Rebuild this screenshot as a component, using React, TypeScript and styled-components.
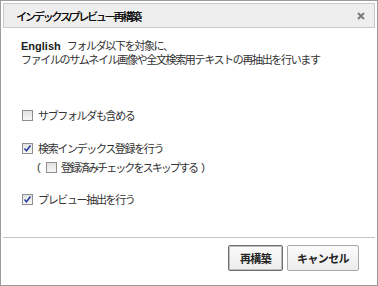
import styled, { createGlobalStyle } from "styled-components";

const GlobalStyle = createGlobalStyle`
    html, body {
        margin: 0;
        padding: 0;
        background: #fff;
    }
    body {
        font-family: "Liberation Sans", "Noto Sans CJK JP", sans-serif;
        font-size: 11px;
        letter-spacing: -1.35px;
        color: #333;
    }
`;

const Dialog = styled.div`
    width: 378px;
    height: 286px;
    box-sizing: border-box;
    border: 1px solid #9c9c9c;
    padding: 2px;
    background: #fff;
    display: flex;
    flex-direction: column;
`;

const TitleBar = styled.div`
    height: 25px;
    box-sizing: border-box;
    border: 1px solid #c9c9c9;
    background: #eeeeee;
    display: flex;
    align-items: center;
    justify-content: space-between;
    padding: 0 9px 0 12px;
`;

const Title = styled.span`
    font-size: 11px;
    font-weight: 400;
    letter-spacing: -2.2px;
    color: #111;
    text-shadow: 0.3px 0 0 #111;
`;

const CloseButton = styled.span`
    display: inline-flex;
    cursor: pointer;
`;

const Content = styled.div`
    flex: 1;
    padding: 11px 0 0 18px;
`;

const Description = styled.p`
    margin: 0;
    line-height: 14px;
    color: #333;

    b {
        color: #222;
        letter-spacing: 0;
        margin-right: 6px;
    }
`;

const Options = styled.div`
    margin-top: 39px;
    display: flex;
    flex-direction: column;
`;

const Row = styled.label<{ $gap?: number; $indent?: number; $tight?: boolean }>`
    height: 18px;
    display: flex;
    align-items: center;
    margin-top: ${(p) => p.$gap ?? 0}px;
    padding-left: ${(p) => p.$indent ?? 1}px;
    letter-spacing: ${(p) => (p.$tight ? -1.9 : -1.35)}px;
    color: #333;
`;

const Box = styled.span<{ $space?: number }>`
    width: 11px;
    height: 11px;
    box-sizing: border-box;
    border: 1px solid #8f8f8f;
    background: linear-gradient(#e2e2e2, #f8f8f8);
    display: inline-flex;
    align-items: center;
    justify-content: center;
    margin-right: ${(p) => p.$space ?? 5}px;
    flex-shrink: 0;
`;

const Paren = styled.span`
    letter-spacing: 0;
    margin-right: 5px;
`;

const ParenEnd = styled.span`
    letter-spacing: 0;
    margin-left: 4px;
`;

const Footer = styled.div`
    border-top: 1px solid #c2c2c2;
    display: flex;
    justify-content: flex-end;
    gap: 4px;
    padding: 7px 16px 12px 0;
`;

const Button = styled.button<{ $primary?: boolean }>`
    width: ${(p) => (p.$primary ? 55 : 72)}px;
    height: 26px;
    box-sizing: border-box;
    padding: 0;
    font-family: "Liberation Sans", "Noto Sans CJK JP", sans-serif;
    font-size: 11px;
    letter-spacing: -0.6px;
    font-weight: 700;
    color: #222;
    background: linear-gradient(#fbfbfb, #ececec);
    border: 1px solid ${(p) => (p.$primary ? "#6f6f6f" : "#a9a9a9")};
    box-shadow: ${(p) => (p.$primary ? "inset 0 0 0 1px #bdbdbd" : "none")};
    border-radius: 2px;
    cursor: pointer;
`;

const Check = ({ checked, space }: { checked?: boolean; space?: number }) => (
    <Box $space={space}>
        {checked && (
            <svg width="9" height="9" viewBox="0 0 9 9">
                <path d="M1.5 4.5 L3.5 6.8 L7.5 1.5" fill="none" stroke="#2b3f9e" strokeWidth="1.6" />
            </svg>
        )}
    </Box>
);

export default function App() {
    return (
        <>
            <GlobalStyle />
            <Dialog>
                <TitleBar>
                    <Title>インデックス/プレビュー再構築</Title>
                    <CloseButton>
                        <svg width="8" height="8" viewBox="0 0 8 8">
                            <path d="M1 1 L7 7 M7 1 L1 7" stroke="#7a7a7a" strokeWidth="2" />
                        </svg>
                    </CloseButton>
                </TitleBar>
                <Content>
                    <Description>
                        <b>English</b>フォルダ以下を対象に、
                        <br />
                        ファイルのサムネイル画像や全文検索用テキストの再抽出を行います
                    </Description>
                    <Options>
                        <Row>
                            <Check />
                            サブフォルダも含める
                        </Row>
                        <Row $gap={15}>
                            <Check checked />
                            検索インデックス登録を行う
                        </Row>
                        <Row $gap={1} $indent={16} $tight>
                            <Paren>(</Paren>
                            <Check space={4} />
                            登録済みチェックをスキップする
                            <ParenEnd>)</ParenEnd>
                        </Row>
                        <Row $gap={14}>
                            <Check checked />
                            プレビュー抽出を行う
                        </Row>
                    </Options>
                </Content>
                <Footer>
                    <Button $primary>再構築</Button>
                    <Button>キャンセル</Button>
                </Footer>
            </Dialog>
        </>
    );
}
